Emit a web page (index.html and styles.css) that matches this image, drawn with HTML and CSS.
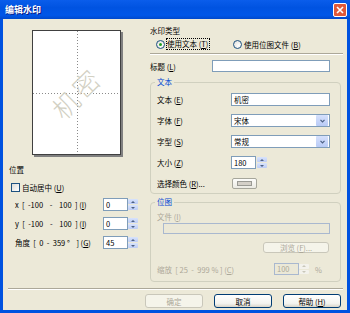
FILE: index.html
```html
<!DOCTYPE html>
<html lang="zh-CN">
  <head>
    <meta charset="UTF-8" />
    <title>编辑水印</title>
    <link rel="stylesheet" href="styles.css">
  </head>
  <body>
    <div class="window">
      <div class="titlebar">
        <span class="title">编辑水印</span>
        <span class="close">
          <svg width="8" height="8" viewBox="0 0 8 8"><path d="M1 1L7 7M7 1L1 7" stroke="#fff" stroke-width="1.6"/></svg>
        </span>
      </div>

      <div class="client">
        <div class="main">
          <!-- 左边：预览和位置 -->
          <div class="left">
            <div class="preview">
              <svg width="87" height="123" viewBox="0 0 87 123">
                <line x1="44.5" y1="0" x2="44.5" y2="123" stroke="#8a8a8a" stroke-dasharray="1 2"/>
                <line x1="0" y1="62.5" x2="87" y2="62.5" stroke="#8a8a8a" stroke-dasharray="1 2"/>
                <!-- 每个字斜放 45 度 -->
                <text class="mark" x="30.8 50.8" y="90.2 69.2" rotate="-45 -45">机密</text>
              </svg>
            </div>

            <div class="pos-label">位置</div>
            <div class="check-row">
              <span class="checkbox"></span>
              <span>自动居中 (<u>U</u>)</span>
            </div>

            <div class="spin-row">
              <span class="spin-label">x&nbsp;&nbsp;[&nbsp;&nbsp;-100&nbsp;&nbsp;&nbsp;&nbsp;-&nbsp;&nbsp;&nbsp;&nbsp;100&nbsp;&nbsp;]&nbsp;(<u>I</u>)</span>
              <span class="edit small">0</span>
              <span class="spin"><span><i class="up"></i></span><span><i class="down"></i></span></span>
            </div>
            <div class="spin-row">
              <span class="spin-label">y&nbsp;&nbsp;[&nbsp;&nbsp;-100&nbsp;&nbsp;&nbsp;&nbsp;-&nbsp;&nbsp;&nbsp;&nbsp;100&nbsp;&nbsp;]&nbsp;(<u>I</u>)</span>
              <span class="edit small">0</span>
              <span class="spin"><span><i class="up"></i></span><span><i class="down"></i></span></span>
            </div>
            <div class="spin-row">
              <span class="spin-label">角度&nbsp;&nbsp;[&nbsp;&nbsp;0&nbsp;&nbsp;-&nbsp;&nbsp;359&nbsp;°&nbsp;&nbsp;&nbsp;&nbsp;]&nbsp;(<u>G</u>)</span>
              <span class="edit small">45</span>
              <span class="spin"><span><i class="up"></i></span><span><i class="down"></i></span></span>
            </div>
          </div>

          <!-- 右边：水印类型 -->
          <div class="right">
            <div class="type-label">水印类型</div>
            <div class="radio-row">
              <span class="radio-item first"><span class="radio on"></span><span class="focus">使用文本 (<u>T</u>)</span></span>
              <span class="radio-item"><span class="radio"></span><span>使用位图文件 (<u>B</u>)</span></span>
            </div>
            <div class="sep"></div>

            <div class="title-row">
              <span class="title-label">标题 (<u>L</u>)</span>
              <span class="edit wide"></span>
            </div>

            <fieldset class="group text-group">
              <legend>文本</legend>
              <div class="row">
                <span class="row-label">文本 (<u>E</u>)</span>
                <span class="edit field">机密</span>
              </div>
              <div class="row">
                <span class="row-label">字体 (<u>F</u>)</span>
                <span class="select"><span class="value">宋体</span><span class="drop"><svg width="5" height="4" viewBox="0 0 5 4"><path d="M0.5 0.8L2.5 2.8L4.5 0.8" fill="none" stroke="#4d6185" stroke-width="1.2"/></svg></span></span>
              </div>
              <div class="row">
                <span class="row-label">字型 (<u>S</u>)</span>
                <span class="select"><span class="value">常规</span><span class="drop"><svg width="5" height="4" viewBox="0 0 5 4"><path d="M0.5 0.8L2.5 2.8L4.5 0.8" fill="none" stroke="#4d6185" stroke-width="1.2"/></svg></span></span>
              </div>
              <div class="row">
                <span class="row-label">大小 (<u>Z</u>)</span>
                <span class="edit small">180</span>
                <span class="spin gap"><span><i class="up"></i></span><span><i class="down"></i></span></span>
              </div>
              <div class="row">
                <span class="row-label">选择颜色 (<u>R</u>)...</span>
                <span class="color-btn"><span class="swatch"></span></span>
              </div>
            </fieldset>

            <fieldset class="group bitmap-group">
              <legend>位图</legend>
              <div class="file-label">文件 (<u>I</u>)</div>
              <div class="edit file disabled"></div>
              <div class="browse-row">
                <span class="btn disabled browse">浏览 (<u>F</u>)...</span>
              </div>
              <div class="scale-row">
                <span class="scale-label">缩放&nbsp;&nbsp;[&nbsp;25&nbsp;&nbsp;-&nbsp;&nbsp;999&nbsp;%&nbsp;]&nbsp;(<u>C</u>)</span>
                <span class="edit small disabled">100</span>
                <span class="spin off"><span><i class="up"></i></span><span><i class="down"></i></span></span>
                <span class="pct">%</span>
              </div>
            </fieldset>
          </div>
        </div>

        <div class="sep bottom-sep"></div>

        <div class="buttons">
          <span class="btn disabled">确定</span>
          <span class="btn">取消</span>
          <span class="btn">帮助 (<u>H</u>)</span>
        </div>
      </div>
    </div>
  </body>
</html>
```

FILE: styles.css
```css
body {
  margin: 0;
  font-family: "Noto Sans CJK SC", "DejaVu Sans", sans-serif;
  font-size: 7.5px;
  color: #000;
}

u {
  text-decoration: underline;
}

.window {
  width: 350px;
  height: 313px;
  box-sizing: border-box;
  padding: 0 3px 3px;
  background: #0052e0;
  display: flex;
  flex-direction: column;
}

.titlebar {
  height: 19px;
  margin: 0 -3px;
  padding: 0 3px 0 5px;
  display: flex;
  align-items: center;
  justify-content: space-between;
  background: linear-gradient(#0a5deb, #0053e1 40%, #0057e8 80%, #0049cc);
}

.title {
  color: #fff;
  font-weight: bold;
  font-size: 9px;
  text-shadow: 1px 1px #0a1883;
}

.close {
  width: 14px;
  height: 14px;
  box-sizing: border-box;
  border: 1px solid #fff;
  border-radius: 2px;
  background: #e0593a;
  display: flex;
  align-items: center;
  justify-content: center;
}

.client {
  flex: 1;
  background: #ece9d8;
  display: flex;
  flex-direction: column;
}

.main {
  display: flex;
  height: 263px;
}

.left {
  width: 147px;
  display: flex;
  flex-direction: column;
}

.right {
  width: 193px;
  display: flex;
  flex-direction: column;
}

/* preview */
.preview {
  width: 89px;
  height: 125px;
  box-sizing: border-box;
  margin: 11px 0 0 29px;
  border: 1px solid #404040;
  box-shadow: 2px 2px 0 #808080;
  background: #fff;
}

.preview svg {
  display: block;
}

.mark {
  font-family: "Noto Sans CJK SC", sans-serif;
  font-size: 26px;
  font-weight: 200;
  fill: #d2d0c3;
}

.pos-label {
  margin: 10px 0 0 6px;
  line-height: 10px;
}

.check-row {
  margin: 7px 0 0 8px;
  height: 10px;
  display: flex;
  align-items: center;
  gap: 2px;
}

.checkbox {
  width: 9px;
  height: 9px;
  box-sizing: border-box;
  border: 1px solid #1c5180;
  background: linear-gradient(135deg, #dcdcd7, #fff);
}

.spin-row {
  height: 13px;
  margin-top: 6px;
  padding-left: 12px;
  display: flex;
  align-items: center;
}

.spin-label {
  width: 88px;
  white-space: nowrap;
}

/* edit boxes */
.edit {
  height: 13px;
  box-sizing: border-box;
  border: 1px solid #7f9db9;
  background: #fff;
  padding-left: 2px;
  display: flex;
  align-items: center;
  line-height: 10px;
}

.edit.small {
  width: 25px;
}

.edit.wide {
  width: 118px;
  height: 12px;
}

.edit.field {
  width: 99px;
}

.edit.disabled {
  background: #ebe8d7;
  border-color: #a9b8cf;
  color: #aca899;
}

.edit.file {
  width: 167px;
  height: 11px;
  margin: 1px 0 0 8px;
}

.spin {
  width: 10px;
  height: 13px;
  padding: 1px 0;
  box-sizing: border-box;
  display: flex;
  flex-direction: column;
  gap: 1px;
}

.spin.gap {
  margin-left: 1px;
}

.spin span {
  flex: 1;
  background: linear-gradient(#d8e3fc, #bcccf5);
  border-radius: 1px;
  display: flex;
  align-items: center;
  justify-content: center;
}

.spin.off span {
  background: #f3f2ec;
}

.spin i {
  width: 0;
  height: 0;
  border-left: 2px solid transparent;
  border-right: 2px solid transparent;
}

.spin i.up {
  border-bottom: 2px solid #4d6185;
}

.spin i.down {
  border-top: 2px solid #4d6185;
}

.spin.off i.up {
  border-bottom-color: #c9c7ba;
}

.spin.off i.down {
  border-top-color: #c9c7ba;
}

/* right side */
.type-label {
  margin-top: 7px;
  line-height: 10px;
}

.radio-row {
  margin-top: 3px;
  height: 10px;
  display: flex;
  align-items: center;
}

.radio-item {
  display: flex;
  align-items: center;
  gap: 2px;
}

.radio-item.first {
  width: 77px;
  margin-left: 6px;
}

.radio {
  width: 9px;
  height: 9px;
  box-sizing: border-box;
  border: 1px solid #1c5180;
  border-radius: 50%;
  background: radial-gradient(circle at 65% 65%, #fff, #dcdcd7);
  display: flex;
  align-items: center;
  justify-content: center;
}

.radio.on::after {
  content: "";
  width: 3px;
  height: 3px;
  border-radius: 50%;
  background: #21a121;
}

.focus {
  outline: 1px dotted #000;
  outline-offset: 0;
  line-height: 10px;
  padding-right: 1px;
}

.sep {
  width: 193px;
  margin-top: 4px;
  border-top: 1px solid #aca899;
  border-bottom: 1px solid #fff;
}

.title-row {
  margin-top: 5px;
  height: 12px;
  display: flex;
  align-items: center;
}

.title-label {
  width: 62px;
}

.group {
  width: 191px;
  box-sizing: border-box;
  margin: 5px 0 0;
  padding: 0 0 3px 4px;
  border: 1px solid #d0d0bf;
  border-radius: 4px;
  min-width: 0;
}

.group legend {
  padding: 0 2px;
  line-height: 10px;
  color: #0046d5;
}

.text-group .row {
  height: 13px;
  margin: 8px 0 0 2px;
  display: flex;
  align-items: center;
}

.text-group .row:first-of-type {
  margin-top: 6px;
}

.row-label {
  width: 74px;
  white-space: nowrap;
}

.select {
  width: 99px;
  height: 13px;
  box-sizing: border-box;
  border: 1px solid #7f9db9;
  background: #fff;
  display: flex;
  align-items: center;
  justify-content: space-between;
  padding: 0 1px 0 2px;
}

.drop {
  width: 12px;
  height: 11px;
  border-radius: 1px;
  background: linear-gradient(#d6e1fc, #b9cbf6);
  display: flex;
  align-items: center;
  justify-content: center;
}

.drop svg {
  display: block;
}

.color-btn {
  width: 25px;
  height: 11px;
  box-sizing: border-box;
  margin-left: 1px;
  border: 1px solid #a6a69b;
  border-radius: 2px;
  background: linear-gradient(#fdfdfb, #ebeae3);
  display: flex;
  align-items: center;
  justify-content: center;
}

.swatch {
  width: 15px;
  height: 5px;
  box-sizing: border-box;
  border: 1px solid #9a9a94;
  background: #d4d0c8;
}

.bitmap-group {
  margin-top: 3px;
  padding-bottom: 6px;
  color: #aca899;
}

.file-label {
  margin: 5px 0 0 2px;
  line-height: 10px;
}

.browse-row {
  margin: 8px 0 0 108px;
  height: 11px;
  display: flex;
}

.btn {
  height: 14px;
  box-sizing: border-box;
  border: 1px solid #003c74;
  border-radius: 3px;
  background: linear-gradient(#fff, #f3f3ef 70%, #d8d4c9);
  display: flex;
  align-items: center;
  justify-content: center;
  color: #000;
}

.btn.disabled {
  border-color: #c9c7ba;
  background: #f5f4ea;
  color: #aca899;
}

.btn.browse {
  width: 66px;
  height: 11px;
}

.scale-row {
  margin: 10px 0 0 2px;
  height: 12px;
  display: flex;
  align-items: center;
}

.scale-label {
  width: 117px;
  white-space: nowrap;
}

.scale-row .edit {
  height: 12px;
}

.scale-row .spin {
  height: 12px;
}

.pct {
  margin-left: 6px;
}

.bottom-sep {
  width: auto;
  margin: 6px 4px 0 5px;
}

.buttons {
  margin-top: 4px;
  padding-right: 6px;
  display: flex;
  justify-content: flex-end;
  gap: 11px;
}

.buttons .btn {
  width: 58px;
}
```
